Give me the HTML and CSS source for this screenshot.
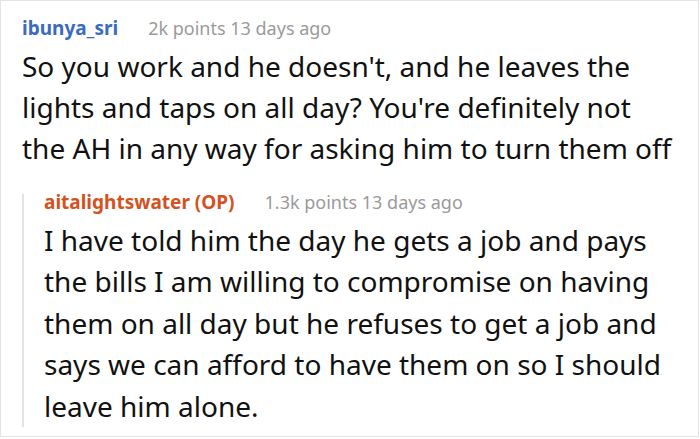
FILE: index.html
```html
<!DOCTYPE html>
<html>
<head>
<meta charset="utf-8">
<link rel="stylesheet" href="styles.css">
</head>
<body>
<div class="card">
  <div class="comment">
    <div class="head"><span class="user">ibunya_sri</span><span class="meta">2k points 13 days ago</span></div>
    <p class="text">So you work and he doesn't, and he leaves the lights and taps on all day? You're definitely not the AH in any way for asking him to turn them off</p>
    <div class="reply">
      <div class="head"><span class="user op">aitalightswater (OP)</span><span class="meta">1.3k points 13 days ago</span></div>
      <p class="text">I have told him the day he gets a job and pays the bills I am willing to compromise on having them on all day but he refuses to get a job and says we can afford to have them on so I should leave him alone.</p>
    </div>
  </div>
</div>
</body>
</html>
```
FILE: styles.css
```css
html, body {
  margin: 0;
  padding: 0;
  background: #fff;
}
.card {
  box-sizing: border-box;
  width: 699px;
  height: 437px;
  border: 1px solid #e4e4e4;
  overflow: hidden;
  font-family: "Noto Sans", sans-serif;
  color: #111;
}
.comment {
  padding: 18.65px 20px 0 21px;
}
.head {
  line-height: 16px;
  display: flex;
  align-items: baseline;
  gap: 30px;
  white-space: nowrap;
}
.user {
  font-size: 19px;
  font-weight: 700;
  color: #3a6bc0;
}
.user.op {
  color: #d5511d;
}
.meta {
  font-size: 18px;
  color: #9a9a9a;
}
.text {
  margin: 10.6px 0 0;
  font-size: 28px;
  line-height: 41px;
}
.reply {
  margin-top: 25px;
  border-left: 2px solid #e3e3e3;
  padding-left: 20px;
}
.reply .text {
  margin-top: 9.6px;
  line-height: 41.5px;
  margin-bottom: -8px;
}
```
